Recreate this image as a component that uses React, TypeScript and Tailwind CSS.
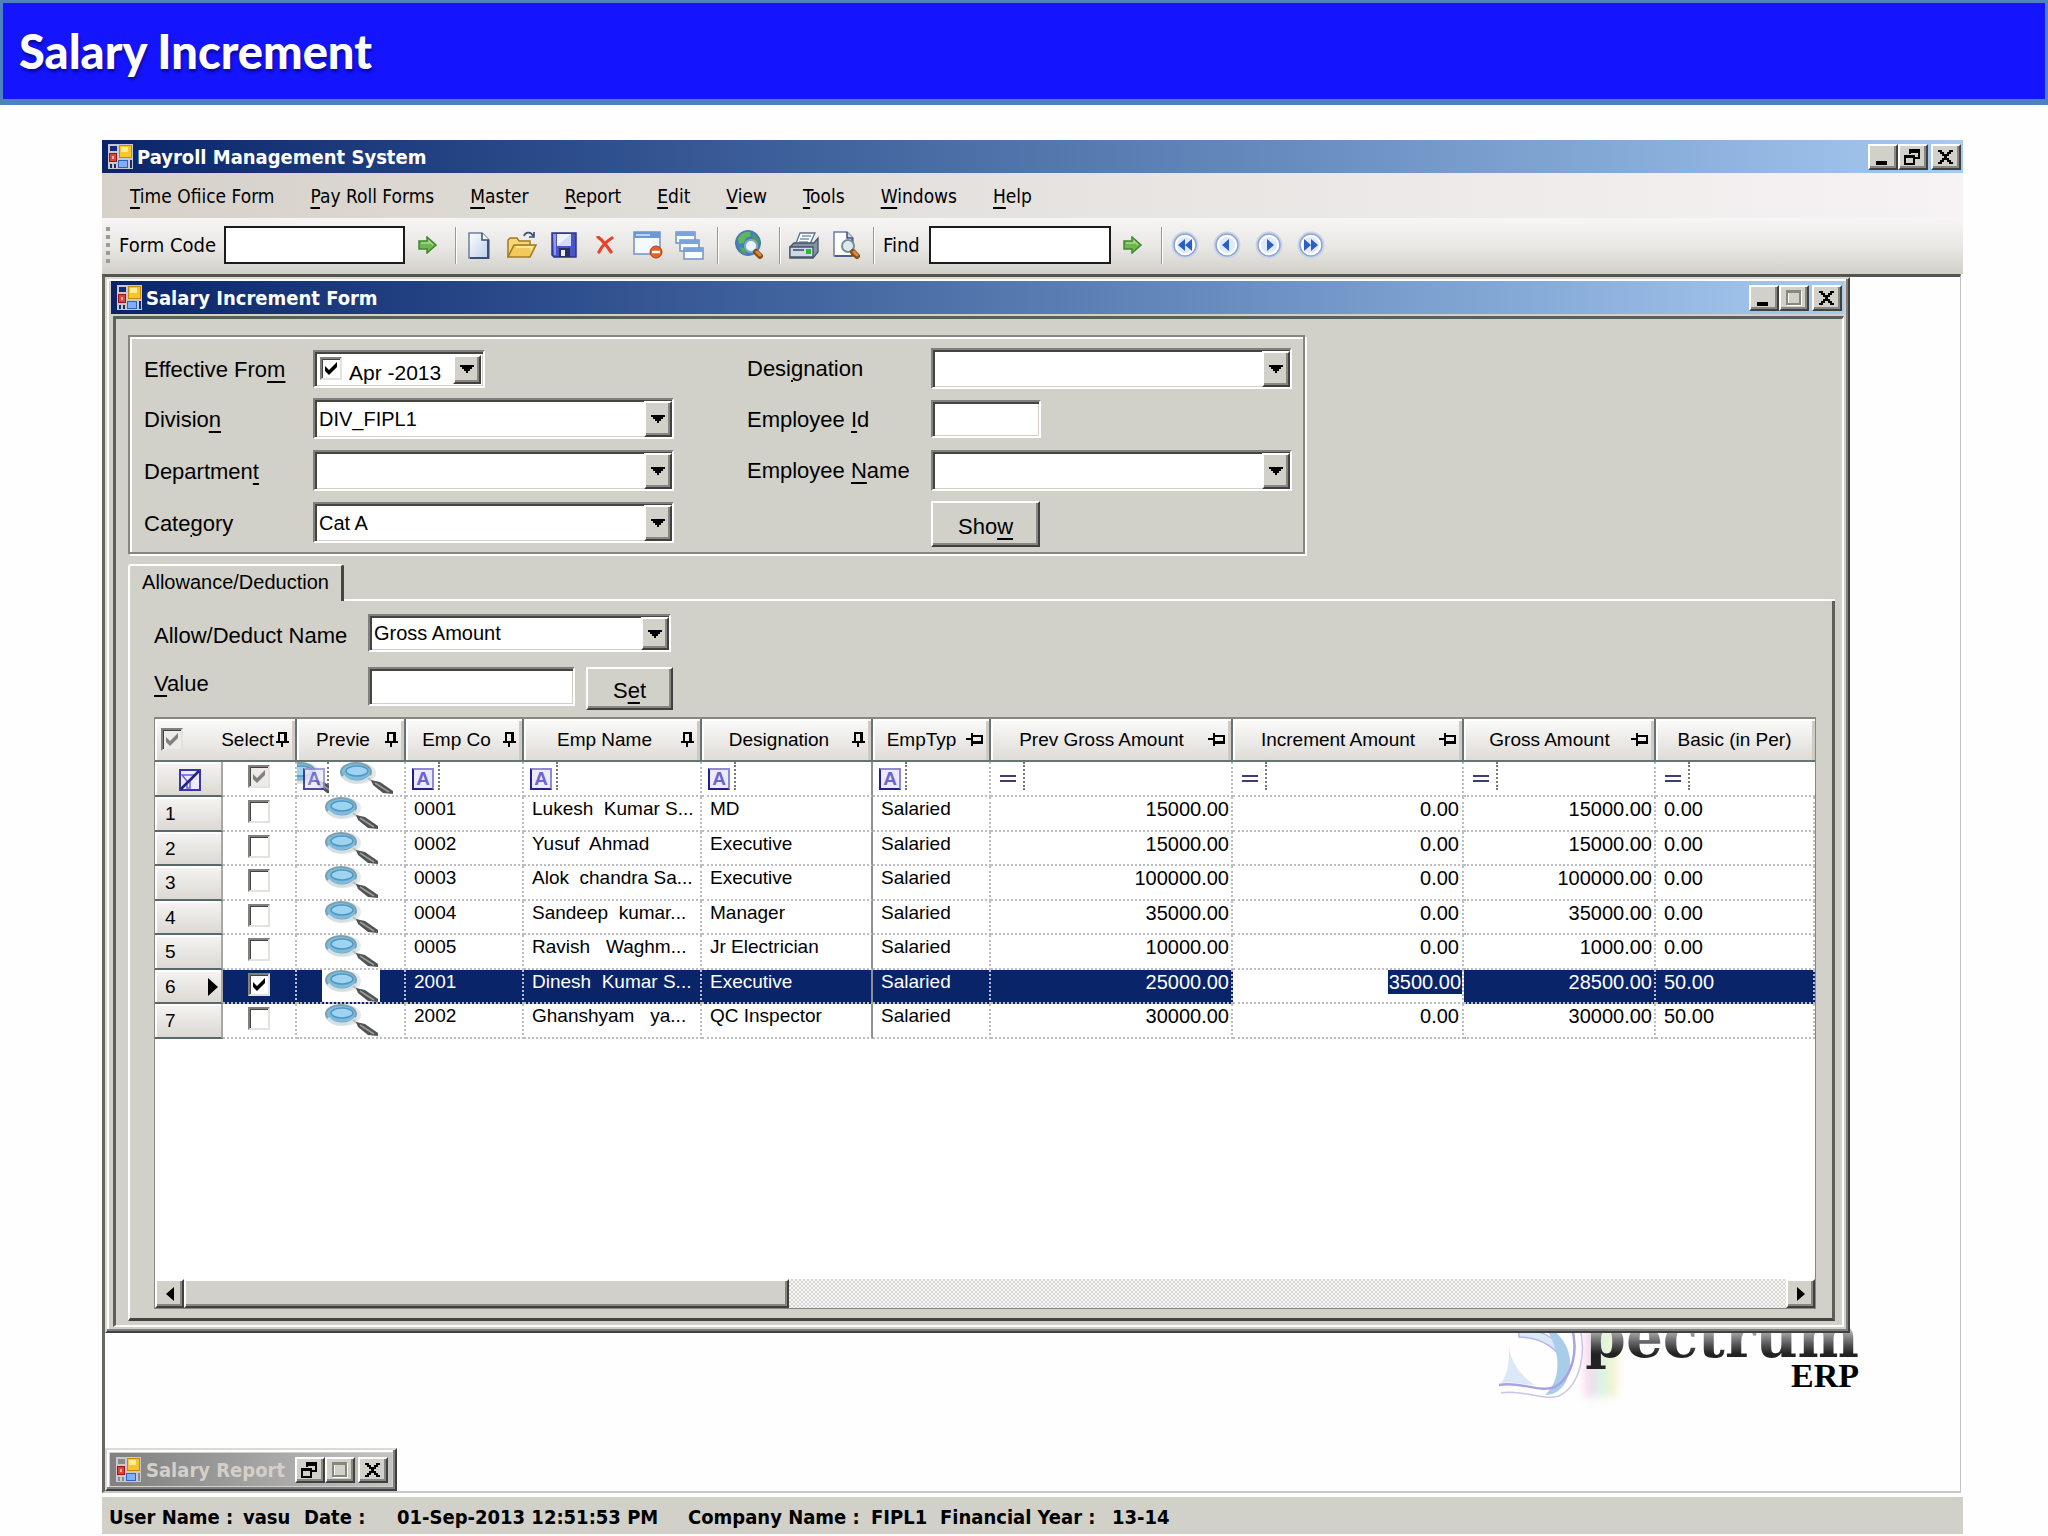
import React from "react";

const SUNKEN =
  "border-2 border-t-[#808080] border-l-[#808080] border-b-white border-r-white shadow-[inset_2px_2px_0_#45453f,inset_-1px_-1px_0_#d4d0c8]";
const RAISED =
  "border-2 border-t-white border-l-white border-b-[#404040] border-r-[#404040] shadow-[inset_-2px_-2px_0_#87877f] bg-[#d2d1c9]";
const UI = "font-['DejaVu_Sans_Condensed','Noto_Sans',sans-serif]";

/* Text with one underlined access key; the key stands between two bars. */
function Key({ t }: { t: string }) {
  const [a, k, b] = t.split("|");
  return (
    <span className="whitespace-pre">
      {a}
      <span className="underline decoration-2 underline-offset-4">{k}</span>
      {b}
    </span>
  );
}

function AppIcon({ dim }: { dim?: boolean }) {
  const base = dim ? "#8a8a8a" : "#16297a";
  return (
    <svg width="25" height="25" viewBox="0 0 25 25" className="shrink-0">
      <rect width="25" height="25" fill="#c9c8cc" />
      <rect x="2" y="2" width="7" height="5" fill={base} />
      <rect x="1" y="9" width="8" height="9" fill="#a01414" />
      <rect x="2" y="10" width="6" height="7" fill="#d8453a" />
      <rect x="4" y="12" width="2" height="3" fill="#f7b0a8" />
      <rect x="2" y="20" width="2" height="4" fill={base} />
      <rect x="6" y="20" width="2" height="4" fill={base} />
      <rect x="11" y="1" width="13" height="13" fill="#c98a08" />
      <rect x="12" y="2" width="11" height="11" fill="#f7c62c" />
      <rect x="13" y="3" width="7" height="5" fill="#fdeb9a" />
      <rect x="10" y="16" width="10" height="8" fill="#2f62c8" />
      <rect x="11" y="17" width="8" height="6" fill="#7fb0f5" />
      <rect x="22" y="16" width="2" height="8" fill={base} />
    </svg>
  );
}

function WinButton({ kind }: { kind: "min" | "restore" | "max" | "close" }) {
  return (
    <button aria-label={kind} className={`flex h-[26px] w-[30px] items-center justify-center ${RAISED}`}>
      <svg width="20" height="18" viewBox="0 0 20 18" shapeRendering="crispEdges">
        {kind === "min" && <rect x="3" y="13" width="11" height="4" fill="#000" />}
        {kind === "restore" && (
          <g fill="none" stroke="#000" strokeWidth="2">
            <path d="M7 6V2h9v8h-4" />
            <path d="M6 3h11" strokeWidth="3" />
            <path d="M2 8h9v8H2z" fill="#d2d1c9" />
            <path d="M1 8h11" strokeWidth="3" />
          </g>
        )}
        {kind === "max" && (
          <g fill="none">
            <path d="M4 3h13v13H4z" stroke="#fff" strokeWidth="2" />
            <path d="M3 2h13v13H3z" stroke="#87877f" strokeWidth="2" />
            <path d="M2 2h15" stroke="#87877f" strokeWidth="3" />
          </g>
        )}
        {kind === "close" && (
          <path
            d="M2 2h4v2h2v2h3V4h2V2h4v2h-2v2h-2v2h-2v2h2v2h2v2h2v2h-4v-2h-2v-2H8v2H6v2H2v-2h2v-2h2v-2h2V8H6V6H4V4H2z"
            fill="#000"
          />
        )}
      </svg>
    </button>
  );
}

function TitleBar({ title, kinds }: { title: string; kinds: ["min", "restore" | "max"] }) {
  return (
    <div className="flex h-[33px] items-center bg-linear-to-r from-[#0a246a] to-[#a6caf0] pl-[6px]">
      <AppIcon />
      <h2 className={`ml-[4px] flex-1 text-[20px] leading-[26px] font-bold text-white ${UI}`}>{title}</h2>
      <WinButton kind={kinds[0]} />
      <WinButton kind={kinds[1]} />
      <span className="mr-[2px] ml-[3px] flex">
        <WinButton kind="close" />
      </span>
    </div>
  );
}

const MENUS = [
  "|T|ime Ofiice Form",
  "|P|ay Roll Forms",
  "|M|aster",
  "|R|eport",
  "|E|dit",
  "|V|iew",
  "|T|ools",
  "|W|indows",
  "|H|elp",
];

const Sep = () => <span className="h-[37px] w-[2px] shrink-0 border-r border-l border-r-white border-l-[#9a9a96]" />;

function Tool({ label, w, children }: { label: string; w: string; children: React.ReactNode }) {
  return (
    <button aria-label={label} className={`flex h-[32px] shrink-0 items-center justify-center ${w}`}>
      {children}
    </button>
  );
}

function GoArrow() {
  return (
    <svg width="20" height="18" viewBox="0 0 20 18">
      <path d="M1 5h8V1l9 8-9 8v-4H1z" fill="#6cb84e" stroke="#43852f" strokeWidth="1.5" />
      <path d="M3 7h8V5l4 4" fill="none" stroke="#a8d890" strokeWidth="1.5" />
    </svg>
  );
}

function NavCircle({ d }: { d: string }) {
  return (
    <svg width="28" height="30" viewBox="0 0 28 30">
      <circle cx="14" cy="15" r="13.5" fill="#c9d5ea" />
      <circle cx="14" cy="15" r="11" fill="#fff" stroke="#8ea6d0" strokeWidth="1.5" />
      <circle cx="14" cy="15" r="8" fill="#dfeafb" />
      <path d={d} fill="#2c5fc4" />
    </svg>
  );
}

function Toolbar() {
  return (
    <div className="flex h-[56px] items-center bg-linear-to-b from-[#f8f6f4] via-[#eae8e5] to-[#d2d0c9] pb-[2px] pl-[4px]">
      <span className="flex flex-col gap-[4px]">
        {[0, 1, 2, 3, 4].map((i) => (
          <span key={i} className="h-[4px] w-[4px] bg-[#9b9b97]" />
        ))}
      </span>
      <label htmlFor="form-code" className={`ml-[9px] w-[105px] text-[20px] whitespace-nowrap ${UI}`}>
        Form Code
      </label>
      <input id="form-code" className="h-[38px] w-[181px] border-2 border-[#1c1c1c] bg-white px-1" />
      <Tool label="Go to form" w="w-[46px]">
        <GoArrow />
      </Tool>
      <span className="ml-[4px] flex">
        <Sep />
      </span>
      <Tool label="New" w="w-[44px]">
        <svg width="22" height="27" viewBox="0 0 22 27">
          <defs>
            <linearGradient id="pg" x1="0" y1="0" x2="1" y2="1">
              <stop offset="0" stopColor="#fff" />
              <stop offset="1" stopColor="#b9cdeb" />
            </linearGradient>
          </defs>
          <path d="M1 1h13l7 7v18H1z" fill="url(#pg)" stroke="#6c7fa5" strokeWidth="1.5" />
          <path d="M20 8v18H2" fill="none" stroke="#3a4c78" strokeWidth="2" />
          <path d="M14 1v7h7" fill="#fff" stroke="#3a4c78" strokeWidth="1.5" />
        </svg>
      </Tool>
      <Tool label="Open" w="w-[42px]">
        <svg width="30" height="28" viewBox="0 0 30 28">
          <path d="M1 26V9l2-2h7l2 3h11v5" fill="#f5d777" stroke="#a27a1e" strokeWidth="1.5" />
          <path d="M1 26l6-12h22l-6 12z" fill="#f3c95a" stroke="#a27a1e" strokeWidth="1.5" />
          <path d="M9 16h16l-1 3" fill="none" stroke="#fff3c0" strokeWidth="1.5" />
          <path d="M17 5c1-4 7-5 9 0M27 1v5h-5" fill="none" stroke="#3d5276" strokeWidth="1.7" />
        </svg>
      </Tool>
      <Tool label="Save" w="w-[42px]">
        <svg width="26" height="26" viewBox="0 0 26 26">
          <path d="M1 1h24v24H3l-2-2z" fill="#4a54c4" stroke="#2c338c" strokeWidth="1.5" />
          <path d="M2 2h3v21H3" fill="#8e97ee" />
          <rect x="6" y="2" width="14" height="12" fill="#eef2fd" />
          <path d="M6 14L20 2v12z" fill="#d3dcf6" />
          <rect x="8" y="16" width="11" height="9" fill="#28305e" />
          <rect x="10" y="18" width="4" height="6" fill="#e8ebf8" />
        </svg>
      </Tool>
      <Tool label="Delete" w="w-[40px]">
        <svg width="18" height="18" viewBox="0 0 18 18">
          <path d="M2 1c4 3 9 9 13 15M16 2C11 5 6 10 3 16" fill="none" stroke="#e8402a" strokeWidth="3.2" strokeLinecap="round" />
        </svg>
      </Tool>
      <Tool label="Close form" w="w-[46px]">
        <svg width="30" height="28" viewBox="0 0 30 28">
          <rect x="1" y="1" width="26" height="22" fill="#f4f8ff" stroke="#6f92c8" strokeWidth="1.5" />
          <rect x="1" y="1" width="26" height="6" fill="#6d96d4" />
          <path d="M3 4h14" stroke="#bcd4f6" strokeWidth="2" />
          <circle cx="23" cy="21" r="6" fill="#e4622a" stroke="#a93c10" />
          <path d="M19 21h8" stroke="#fff" strokeWidth="2.5" />
        </svg>
      </Tool>
      <Tool label="Cascade" w="w-[38px]">
        <svg width="30" height="29" viewBox="0 0 30 29">
          {[0, 1, 2].map((i) => (
            <g key={i}>
              <rect x={1 + i * 4} y={1 + i * 8} width="19" height="11" fill="#fafcff" stroke="#6f92c8" strokeWidth="1.5" />
              <rect x={1 + i * 4} y={1 + i * 8} width="19" height="4" fill="#7ba2de" />
            </g>
          ))}
        </svg>
      </Tool>
      <span className="ml-[8px] flex">
        <Sep />
      </span>
      <Tool label="Browse" w="w-[60px]">
        <svg width="30" height="30" viewBox="0 0 30 30">
          <circle cx="14" cy="13" r="12.5" fill="#3f7fc4" stroke="#4f7398" />
          <path d="M4 8c3-5 8-7 12-6l1 4-5 2-2 5-5 1z" fill="#63b45c" />
          <path d="M19 4c4 2 6 6 6 10l-4 2-3-5z" fill="#4f9e50" />
          <path d="M5 17l5 1 2 6-4-2z" fill="#55b04c" />
          <circle cx="17" cy="16" r="6" fill="#e9f5fc" stroke="#8aa9bd" strokeWidth="2" />
          <path d="M22 22l4 4" stroke="#8a4c12" strokeWidth="6" strokeLinecap="round" />
          <path d="M23 22l3 3" stroke="#d98a3c" strokeWidth="3" strokeLinecap="round" />
        </svg>
      </Tool>
      <Sep />
      <Tool label="Print" w="w-[46px]">
        <svg width="30" height="27" viewBox="0 0 30 27">
          <path d="M11 1h15l-6 13H6z" fill="#fff" stroke="#59708f" strokeWidth="1.3" />
          <path d="M13 4h9M11 7h9M10 10h9" stroke="#7d93b4" strokeWidth="1.3" />
          <path d="M1 15l4-4 20 0 4-5v14l-5 6H1z" fill="#8393a8" stroke="#46546a" strokeWidth="1.3" />
          <path d="M1 15h23v10H1z" fill="#cfd9e6" stroke="#46546a" strokeWidth="1.3" />
          <path d="M4 18h11" stroke="#5d6c82" strokeWidth="2" />
          <rect x="17" y="17" width="5" height="5" fill="#1fc51f" />
        </svg>
      </Tool>
      <Tool label="Print preview" w="w-[40px]">
        <svg width="28" height="29" viewBox="0 0 28 29">
          <path d="M1 1h13l6 6v18H1z" fill="#fff" stroke="#6c7fa5" strokeWidth="1.5" />
          <path d="M14 1v6h6" fill="#cdd9ee" stroke="#3a4c78" strokeWidth="1.5" />
          <path d="M19 8v17H2" fill="none" stroke="#3a4c78" strokeWidth="1.5" />
          <circle cx="15" cy="15" r="6" fill="#d9eaf2" stroke="#7c8d96" strokeWidth="2" />
          <path d="M20 21l4 4" stroke="#8a4c12" strokeWidth="6" strokeLinecap="round" />
          <path d="M21 21l3 3" stroke="#d98a3c" strokeWidth="3" strokeLinecap="round" />
        </svg>
      </Tool>
      <span className="ml-[6px] flex">
        <Sep />
      </span>
      <label htmlFor="find" className={`ml-[8px] w-[46px] text-[20px] ${UI}`}>
        Find
      </label>
      <input id="find" className="h-[38px] w-[182px] border-2 border-[#1c1c1c] bg-white px-1" />
      <Tool label="Find next" w="w-[44px]">
        <GoArrow />
      </Tool>
      <span className="ml-[6px] flex">
        <Sep />
      </span>
      <span className="ml-[8px] flex gap-[14px]">
        <button aria-label="First"><NavCircle d="M14 9v12l-7-6zM21 9v12l-7-6z" /></button>
        <button aria-label="Previous"><NavCircle d="M16 9v12l-7-6z" /></button>
        <button aria-label="Next"><NavCircle d="M12 9v12l7-6z" /></button>
        <button aria-label="Last"><NavCircle d="M7 9v12l7-6zM14 9v12l7-6z" /></button>
      </span>
    </div>
  );
}

function DropArrow({ w = "w-[28px]" }: { w?: string }) {
  return (
    <span className={`pointer-events-none absolute top-[3px] right-[2px] bottom-[2px] flex items-center justify-center ${w} ${RAISED}`}>
      <svg width="14" height="8" viewBox="0 0 14 8" shapeRendering="crispEdges">
        <path d="M0 0h14v2h-2v2h-2v2H8v2H6V6H4V4H2V2H0z" fill="#000" />
      </svg>
    </span>
  );
}

function Combo({ id, value, w, h = "h-[41px]" }: { id: string; value: string; w: string; h?: string }) {
  return (
    <span className={`relative block shrink-0 ${w} ${h}`}>
      <select id={id} defaultValue={value} className={`h-full w-full appearance-none bg-white pl-[4px] text-[20px] outline-none ${SUNKEN}`}>
        <option>{value}</option>
      </select>
      <DropArrow />
    </span>
  );
}

function Check({ label, checked, grey }: { label: string; checked?: boolean; grey?: boolean }) {
  return (
    <span className="relative inline-block h-[23px] w-[22px] align-top">
      <input
        type="checkbox"
        aria-label={label}
        defaultChecked={checked}
        className={`block h-full w-full appearance-none ${grey ? "bg-[#ecebe7]" : "bg-white"} border-2 border-t-[#808080] border-l-[#808080] border-r-[#e4e2dc] border-b-[#e4e2dc] shadow-[inset_1px_1px_0_#45453f]`}
      />
      {checked && (
        <svg className="pointer-events-none absolute inset-0" width="22" height="23" viewBox="0 0 22 23">
          <path d="M5 9v5l4 4 8-8V5l-8 8z" fill={grey ? "#808080" : "#000"} />
        </svg>
      )}
    </span>
  );
}

function Field({ label, id, lw, h, children }: { label: string; id: string; lw: string; h: string; children: React.ReactNode }) {
  return (
    <div className={`flex items-center ${h}`}>
      <label htmlFor={id} className={`shrink-0 pt-[2px] text-[22px] leading-[26px] ${lw}`}>
        <Key t={label} />
      </label>
      {children}
    </div>
  );
}

function Lens({ clip }: { clip?: boolean }) {
  return (
    <svg width={clip ? 32 : 56} height="33" viewBox={clip ? "14 0 32 33" : "0 0 56 33"} className="block shrink-0">
      <ellipse cx="19" cy="11" rx="18" ry="11" fill="#e3e9ea" />
      <ellipse cx="17" cy="10" rx="15" ry="9" fill="#7dbbdf" stroke="#7fa0ab" strokeWidth="2" />
      <ellipse cx="18" cy="9" rx="11" ry="5" fill="#9ed3f1" stroke="#4f97c2" strokeWidth="1.5" />
      <path d="M4 14c6 8 20 8 28 0" fill="none" stroke="#d3e0e3" strokeWidth="3" />
      <path d="M29 16l5 4" stroke="#b9c0c0" strokeWidth="2" />
      <path d="M32 18l9 2 13 9v3l-10-1-10-8z" fill="#505354" />
      <path d="M36 21l14 9" stroke="#9a9c9c" strokeWidth="1.5" />
    </svg>
  );
}

function PinDown() {
  return (
    <svg width="13" height="15" viewBox="0 0 13 15" shapeRendering="crispEdges" className="shrink-0">
      <path d="M2 0h9v9h2v2H7v4H5v-4H0V9h2zM4 2v7h4V2z" fill="#000" fillRule="evenodd" />
    </svg>
  );
}

function PinSide() {
  return (
    <svg width="17" height="13" viewBox="0 0 17 13" shapeRendering="crispEdges" className="shrink-0">
      <path d="M5 0h2v2h10v9H7v2H5V7H0V5h5zM7 4v4h8V4z" fill="#000" fillRule="evenodd" />
    </svg>
  );
}

function FilterA() {
  return (
    <span className="flex h-[22px] w-[22px] items-center justify-center border-2 border-t-[#8f8ad8] border-r-[#8f8ad8] border-b-[#23208a] border-l-[#23208a] bg-[#eceafc] text-[19px] leading-[18px] font-bold text-[#6a64d0]">
      A
    </span>
  );
}

const HEADS: [string, "d" | "s" | ""][] = [
  ["Previe", "d"],
  ["Emp Co", "d"],
  ["Emp Name", "d"],
  ["Designation", "d"],
  ["EmpTyp", "s"],
  ["Prev Gross Amount", "s"],
  ["Increment Amount", "s"],
  ["Gross Amount", "s"],
  ["Basic (in Per)", ""],
];

const ROWS = [
  ["0001", "Lukesh  Kumar S...", "MD", "15000.00", "0.00", "15000.00", "0.00"],
  ["0002", "Yusuf  Ahmad", "Executive", "15000.00", "0.00", "15000.00", "0.00"],
  ["0003", "Alok  chandra Sa...", "Executive", "100000.00", "0.00", "100000.00", "0.00"],
  ["0004", "Sandeep  kumar...", "Manager", "35000.00", "0.00", "35000.00", "0.00"],
  ["0005", "Ravish   Waghm...", "Jr Electrician", "10000.00", "0.00", "1000.00", "0.00"],
  ["2001", "Dinesh  Kumar S...", "Executive", "25000.00", "3500.00", "28500.00", "50.00"],
  ["2002", "Ghanshyam   ya...", "QC Inspector", "30000.00", "0.00", "30000.00", "50.00"],
];

const HEAD_CELL =
  "h-[43px] border-r-2 border-b-2 border-[#667574] bg-linear-to-b from-[#fbfbfa] to-[#dfdcd7] p-0 font-normal shadow-[inset_2px_2px_0_#fff,inset_-3px_0_0_#cfcbc4]";
const ROW_HEAD =
  "border-r-2 border-b-2 border-b-[#59696a] border-r-[#a8a8a2] bg-linear-to-b from-[#f6f5f3] to-[#dcd9d4] p-0 text-left align-top font-normal shadow-[inset_2px_2px_0_#fff]";
const CELL = "overflow-hidden border-r-2 border-b-2 border-dotted border-[#bdbdc1] p-0 align-top whitespace-pre";
const NUM = "text-right text-[20px]";

function GridTable() {
  return (
    <table className="w-full table-fixed border-separate border-spacing-0 text-[19px] leading-[24px]">
      <colgroup>
        <col className="w-[68px]" />
        <col className="w-[74px]" />
        <col className="w-[109px]" />
        <col className="w-[118px]" />
        <col className="w-[178px]" />
        <col className="w-[171px]" />
        <col className="w-[118px]" />
        <col className="w-[242px]" />
        <col className="w-[231px]" />
        <col className="w-[192px]" />
        <col />
      </colgroup>
      <thead>
        <tr>
          <th colSpan={2} className={HEAD_CELL}>
            <div className="flex items-center pr-[6px] pl-[6px]">
              <Check label="Select all" checked grey />
              <span className="flex-1 pr-[2px] text-right">Select</span>
              <PinDown />
            </div>
          </th>
          {HEADS.map(([t, p]) => (
            <th key={t} className={`${HEAD_CELL} last:border-r-0`}>
              <div className="flex items-center pr-[6px] pl-[4px]">
                <span className="flex-1 text-center whitespace-nowrap">{t}</span>
                {p === "d" && <PinDown />}
                {p === "s" && <PinSide />}
              </div>
            </th>
          ))}
        </tr>
      </thead>
      <tbody>
        <tr className="h-[34px]">
          <th className={ROW_HEAD}>
            <button aria-label="Clear filters" className="mt-[7px] ml-[24px] block">
              <svg width="22" height="22" viewBox="0 0 22 22">
                <rect x="1" y="1" width="20" height="20" fill="#eceafc" stroke="#3a36a8" strokeWidth="2" />
                <path d="M3 6h13l-5 6v7H8v-7z" fill="none" stroke="#6a64d0" strokeWidth="1.5" />
                <path d="M2 20L20 2" stroke="#23208a" strokeWidth="2.5" />
              </svg>
            </button>
          </th>
          <td className={`${CELL} pt-[3px] text-center`}>
            <Check label="Filter select" checked grey />
          </td>
          <td className={CELL}>
            <div className="flex">
              <span className="relative flex h-[31px] w-[32px] border-r-2 border-dotted border-[#777]">
                <Lens clip />
                <span className="absolute top-[6px] left-[6px] opacity-80">
                  <FilterA />
                </span>
              </span>
              <span className="ml-[10px]">
                <Lens />
              </span>
            </div>
          </td>
          {[0, 1, 2, 3].map((i) => (
            <td key={i} className={`${CELL} ${i === 2 ? "[border-right-style:solid] border-r-[#8d8f90]" : ""}`}>
              <div className="flex h-[28px] w-[34px] items-end border-r-2 border-dotted border-[#777] pl-[6px]">
                <FilterA />
              </div>
            </td>
          ))}
          {[0, 1, 2, 3].map((i) => (
            <td key={i} className={`${CELL} last:border-r-0`}>
              <div className="flex h-[28px] w-[34px] items-center border-r-2 border-dotted border-[#777] pt-[5px] pl-[9px]">
                <span className="h-[7px] w-[16px] border-y-2 border-[#3f3a78]" />
              </div>
            </td>
          ))}
        </tr>
        {ROWS.map((r, i) => {
          const sel = i === 5;
          const bg = sel ? "bg-[#0a246a] text-white" : "";
          return (
            <tr key={r[0]} className={i % 2 ? "h-[34px]" : "h-[35px]"}>
              <th className={ROW_HEAD}>
                <div className="flex items-center justify-between pt-[5px] pr-[3px] pl-[10px]">
                  {i + 1}
                  {sel && (
                    <svg width="10" height="18" viewBox="0 0 10 18">
                      <path d="M0 0l10 9-10 9z" fill="#000" />
                    </svg>
                  )}
                </div>
              </th>
              <td className={`${CELL} ${bg} pt-[3px] text-center`}>
                <Check label={`Select ${r[0]}`} checked={sel} />
              </td>
              <td className={`${CELL} ${bg} leading-none`}>
                <button aria-label={`Preview ${r[0]}`} className="ml-[25px] block h-[32px] w-[58px] bg-white pl-[2px]">
                  <Lens />
                </button>
              </td>
              <td className={`${CELL} ${bg} pl-[8px]`}>{r[0]}</td>
              <td className={`${CELL} ${bg} pl-[8px]`}>{r[1]}</td>
              <td className={`${CELL} ${bg} [border-right-style:solid] border-r-[#8d8f90] pl-[8px]`}>{r[2]}</td>
              <td className={`${CELL} ${bg} pl-[8px]`}>Salaried</td>
              <td className={`${CELL} ${NUM} ${bg} pr-[2px]`}>{r[3]}</td>
              <td className={`${CELL} ${NUM} ${sel ? "" : "pr-[3px]"}`}>
                <span className={sel ? "inline-block bg-[#0a246a] px-[1px] text-white" : ""}>{r[4]}</span>
              </td>
              <td className={`${CELL} ${NUM} ${bg} pr-[2px]`}>{r[5]}</td>
              <td className={`${CELL} ${bg} border-r-0 pl-[8px] text-[20px]`}>{r[6]}</td>
            </tr>
          );
        })}
      </tbody>
    </table>
  );
}

function ScrollBar() {
  return (
    <div className="flex h-[29px] bg-[#e9e8e5]">
      <button aria-label="Scroll left" className={`flex w-[29px] items-center justify-center ${RAISED}`}>
        <svg width="8" height="14" viewBox="0 0 8 14"><path d="M8 0v14L0 7z" fill="#000" /></svg>
      </button>
      <div className={`w-[605px] ${RAISED}`} />
      <div className="flex-1 bg-[repeating-conic-gradient(#d6d5d1_0_25%,#f8f8f6_0_50%)] bg-size-[4px_4px]" />
      <button aria-label="Scroll right" className={`flex w-[29px] items-center justify-center ${RAISED}`}>
        <svg width="8" height="14" viewBox="0 0 8 14"><path d="M0 0v14l8-7z" fill="#000" /></svg>
      </button>
    </div>
  );
}

function IncrementWindow() {
  return (
    <section className="relative mr-[110px] border-2 border-t-[#dcdad4] border-r-[#404040] border-b-[#404040] border-l-[#dcdad4] bg-[#d2d1c9] px-[4px] pt-[2px] pb-[4px] shadow-[inset_-2px_-2px_0_#808080,inset_2px_2px_0_#fff]">
      <TitleBar title="Salary Increment Form" kinds={["min", "max"]} />
      <div className="mt-[2px] ml-[2px] border-t-[3px] border-r-2 border-b-2 border-l-[3px] border-t-[#5c5f5a] border-r-white border-b-white border-l-[#5c5f5a] pt-[16px] pr-[7px] pb-[4px] pl-[12px]">
        <form className="flex w-[1177px] gap-[73px] border-2 border-[#87877f] p-[10px] pb-[5px] pl-[14px] shadow-[inset_2px_2px_0_#fff,2px_2px_0_#fff]">
          <div className="flex flex-col gap-[11px] pt-[3px]">
            <Field label="Effective Fro|m|" id="eff" lw="w-[169px]" h="h-[37px]">
              <div className={`relative flex h-[38px] w-[172px] items-center bg-white pl-[5px] ${SUNKEN}`}>
                <Check label="Use effective date" checked />
                <input id="eff" defaultValue="Apr -2013" className="ml-[7px] w-[105px] pt-[8px] text-[21px] outline-none" />
                <DropArrow />
              </div>
            </Field>
            <Field label="Divisio|n|" id="div" lw="w-[169px]" h="h-[41px]">
              <Combo id="div" value="DIV_FIPL1" w="w-[361px]" />
            </Field>
            <Field label="Departmen|t|" id="dep" lw="w-[169px]" h="h-[41px]">
              <Combo id="dep" value="" w="w-[361px]" />
            </Field>
            <Field label="Cate|g|ory" id="cat" lw="w-[169px]" h="h-[41px]">
              <Combo id="cat" value="Cat A" w="w-[361px]" />
            </Field>
          </div>
          <div className="flex flex-col gap-[11px] pt-[1px]">
            <Field label="Desi|g|nation" id="des" lw="w-[184px]" h="h-[40px]">
              <Combo id="des" value="" w="w-[361px]" />
            </Field>
            <Field label="Employee |I|d" id="eid" lw="w-[184px]" h="h-[40px]">
              <input id="eid" className={`h-[38px] w-[110px] bg-white px-1 ${SUNKEN}`} />
            </Field>
            <Field label="Employee |N|ame" id="enm" lw="w-[184px]" h="h-[40px]">
              <Combo id="enm" value="" w="w-[361px]" />
            </Field>
            <button type="button" className={`ml-[184px] h-[46px] w-[109px] pt-[4px] text-[22px] ${RAISED}`}>
              <Key t="Sho|w|" />
            </button>
          </div>
        </form>

        <div className="mt-[10px] flex">
          <button role="tab" className="h-[37px] w-[216px] rounded-t-[3px] border-t-2 border-r-[3px] border-l-2 border-t-white border-r-[#45453f] border-l-white pb-[4px] text-[20px]">
            Allowance/Deduction
          </button>
          <div className="flex-1 border-b-2 border-white" />
        </div>
        <div className="border-r-[3px] border-b-[3px] border-l-2 border-r-[#5c5f5a] border-b-[#45453f] border-l-white pt-[13px] pr-[16px] pb-[9px] pl-[24px]">
          <div className="flex items-center">
            <label htmlFor="adn" className="w-[214px] pt-[4px] text-[22px]">
              Allow/Deduct Name
            </label>
            <Combo id="adn" value="Gross Amount" w="w-[303px]" h="h-[38px]" />
          </div>
          <div className="mt-[15px] mb-[7px] flex items-start">
            <label htmlFor="val" className="w-[214px] text-[22px] leading-[34px]">
              <Key t="|V|alue" />
            </label>
            <input id="val" className={`h-[39px] w-[207px] bg-white px-1 ${SUNKEN}`} />
            <button className={`ml-[11px] h-[43px] w-[87px] pt-[4px] text-[22px] ${RAISED}`}>
              <Key t="S|e|t" />
            </button>
          </div>
          <div className="border border-t-2 border-[#87877f] bg-white">
            <GridTable />
            <div className="h-[240px]" />
            <ScrollBar />
          </div>
        </div>
      </div>
    </section>
  );
}

function Logo() {
  return (
    <div className="absolute top-[1018px] right-[101px] flex w-[362px] items-start">
      <svg width="88" height="110" viewBox="0 6 88 110" className="shrink-0">
        <path d="M22 40c24 0 44 10 46 36-6-16-24-28-46-28z" fill="#dbe8f8" stroke="#b5b9ea" strokeWidth="1.5" />
        <path d="M46 34c24 14 32 34 24 56-4 10-12 16-22 16 16-14 18-42-2-72z" fill="#a8cdea" />
        <path d="M74 36c8 24 2 52-16 62-16 6-34-6-56-2" fill="none" stroke="#a8a2e0" strokeWidth="2.5" />
        <path d="M82 36c8 26 2 60-20 71-18 5-36-7-58-3" fill="none" stroke="#c9c6e8" strokeWidth="1.5" />
        <path d="M12 56c0 14 12 32 26 40-12 0-22-4-34-2 8-10 8-24 8-38z" fill="#dbe8f8" />
      </svg>
      <div className="relative flex flex-1 flex-col items-end">
        <span className="absolute top-[34px] left-0 h-[68px] w-[32px] bg-linear-to-r from-[#f7a8e6] via-[#b8f3d8] to-[#f8e59a] opacity-60 blur-[4px]" />
        <span className="relative bg-linear-to-b from-[#b4b4b4] from-42% to-[#222] to-70% bg-clip-text font-['DejaVu_Serif',serif] text-[58px] leading-[84px] font-bold text-transparent">
          pectrum
        </span>
        <span className="relative -mt-[20px] font-['Liberation_Serif',serif] text-[34px] leading-[34px] font-bold">ERP</span>
      </div>
    </div>
  );
}

export default function App() {
  return (
    <div className="flex min-h-screen flex-col bg-[#fefefe] pb-[2px] font-['Liberation_Sans',Arial,sans-serif] text-black">
      <header className="flex h-[105px] items-center border-t-[3px] border-r-[3px] border-b-[6px] border-l-[3px] border-[#4f81bd] bg-[#1414ff] pl-[16px]">
        <h1 className="font-['Lato',sans-serif] text-[47px] leading-[60px] font-black text-white [text-shadow:1px_3px_3px_rgba(0,0,60,0.5)]">
          Salary Increment
        </h1>
      </header>

      <main className="mt-[35px] mr-[85px] ml-[102px] flex flex-1 flex-col">
        <TitleBar title="Payroll Management System" kinds={["min", "restore"]} />
        <nav className={`flex h-[45px] items-center gap-[36px] bg-linear-to-r from-[#d6d2ca] to-[#f7f3f5] pt-[2px] pl-[28px] text-[19px] ${UI}`}>
          {MENUS.map((m) => (
            <button key={m}>
              <Key t={m} />
            </button>
          ))}
        </nav>
        <Toolbar />
        <div className="relative mr-[2px] flex flex-1 flex-col justify-between border-t-[3px] border-r border-b-2 border-l-[3px] border-t-[#55554f] border-r-[#c4c4c4] border-b-[#c8c8c8] border-l-[#66665f] bg-[#fefefe]">
          <Logo />
          <IncrementWindow />
          <div className="flex w-[292px] border-2 border-t-[#dcdad4] border-r-[#404040] border-b-[#404040] border-l-[#dcdad4] bg-[#d2d1c9] p-[3px] shadow-[inset_-2px_-2px_0_#808080,inset_2px_2px_0_#fff]">
            <div className="flex h-[33px] w-full items-center bg-linear-to-r from-[#808080] to-[#c4c4c4] pl-[6px]">
              <AppIcon dim />
              <span className={`ml-[5px] w-[149px] overflow-hidden text-[20px] font-bold whitespace-nowrap text-[#d4d0c8] ${UI}`}>
                Salary Report
              </span>
              <WinButton kind="restore" />
              <WinButton kind="max" />
              <span className="ml-[3px] flex">
                <WinButton kind="close" />
              </span>
            </div>
          </div>
        </div>
        <footer className={`mt-[4px] flex h-[37px] items-center bg-[#d2d1c9] pt-[2px] pl-[7px] text-[20px] font-bold whitespace-pre ${UI}`}>
          <span className="w-[134px]">User Name :</span>
          <span className="w-[61px]">vasu</span>
          <span className="w-[93px]">Date :</span>
          <span className="w-[291px]">01-Sep-2013 12:51:53 PM</span>
          <span className="w-[183px]">Company Name :</span>
          <span className="w-[69px]">FIPL1</span>
          <span className="w-[172px]">Financial Year :</span>
          <span>13-14</span>
        </footer>
      </main>
    </div>
  );
}
